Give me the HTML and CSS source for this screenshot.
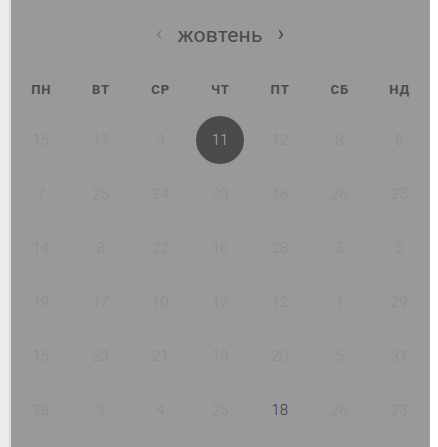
FILE: index.html
```html
<!DOCTYPE html>
<html lang="uk">
<head>
<meta charset="utf-8">
<link rel="stylesheet" href="styles.css">
</head>
<body>
<div class="page">
  <div class="side"></div>
  <div class="panel">
    <div class="header">
      <span class="nav">&#8249;</span>
      <span class="month">жовтень</span>
      <span class="nav next">&#8250;</span>
    </div>
    <div class="weekdays">
      <span>ПН</span><span>ВТ</span><span>СР</span><span>ЧТ</span><span>ПТ</span><span>СБ</span><span>НД</span>
    </div>
    <div class="days">
      <span>15</span><span>17</span><span>9</span><span class="sel"><b>11</b></span><span>12</span><span>8</span><span>8</span>
      <span>7</span><span>25</span><span>24</span><span>30</span><span>16</span><span>26</span><span>25</span>
      <span>14</span><span>8</span><span>22</span><span>16</span><span>28</span><span>3</span><span>5</span>
      <span>19</span><span>17</span><span>10</span><span>12</span><span>12</span><span>1</span><span>29</span>
      <span>15</span><span>23</span><span>21</span><span>19</span><span>20</span><span>5</span><span>31</span>
      <span>28</span><span>3</span><span>4</span><span>25</span><span class="cur">18</span><span>26</span><span>23</span>
    </div>
  </div>
</div>
</body>
</html>
```

FILE: styles.css
```css
html, body {
  margin: 0;
  padding: 0;
  background: #ffffff;
}
.page {
  display: flex;
  height: 447px;
  overflow: hidden;
  font-family: Roboto, "Liberation Sans", sans-serif;
}
.side {
  width: 11px;
  flex: none;
  background: #ececec;
  box-shadow: inset -3px 0 3px -1px rgba(0,0,0,0.08);
}
.panel {
  width: 418px;
  flex: none;
  background: #999999;
  border-right: 1px solid #a4a4a4;
}
.header {
  display: flex;
  justify-content: center;
  align-items: center;
  gap: 15px;
  height: 24px;
  margin-top: 23px;
}
.month {
  font-size: 21px;
  color: #4a4a4a;
  letter-spacing: 0.2px;
}
.nav {
  font-size: 22px;
  color: #7a7a7a;
  line-height: 24px;
  margin-top: -3px;
}
.nav.next {
  color: #4a4a4a;
}
.weekdays {
  display: grid;
  grid-template-columns: repeat(7, 1fr);
  margin-top: 30px;
  height: 24px;
  align-items: center;
}
.weekdays span {
  text-align: center;
  font-size: 13px;
  font-weight: 700;
  color: #4a4a4a;
  letter-spacing: 1px;
  padding-left: 1px;
}
.days {
  display: grid;
  grid-template-columns: repeat(7, 1fr);
  grid-auto-rows: 54px;
  margin-top: 12px;
}
.days span {
  display: flex;
  align-items: center;
  justify-content: center;
  font-size: 15px;
  font-weight: 300;
  color: #8c8c8c;
}
.days .sel b {
  display: flex;
  align-items: center;
  justify-content: center;
  width: 48px;
  height: 48px;
  border-radius: 50%;
  background: #4b4b4b;
  color: #b0b0b0;
  font-weight: 300;
}
.days .cur {
  color: #3a3a3a;
}
```
